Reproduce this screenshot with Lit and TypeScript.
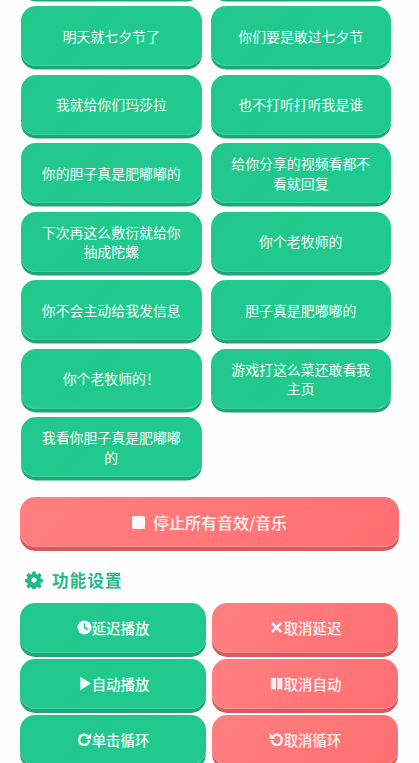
import { LitElement, html, css, svg } from "lit";
import { customElement } from "lit/decorators.js";

const rows: string[] = [
  "",
  "",
  "明天就七夕节了",
  "你们要是敢过七夕节",
  "我就给你们玛莎拉",
  "也不打听打听我是谁",
  "你的胆子真是肥嘟嘟的",
  "给你分享的视频看都不看就回复",
  "下次再这么敷衍就给你抽成陀螺",
  "你个老牧师的",
  "你不会主动给我发信息",
  "胆子真是肥嘟嘟的",
  "你个老牧师的！",
  "游戏打这么菜还敢看我主页",
  "我看你胆子真是肥嘟嘟的",
];

const icons: Record<string, unknown> = {
  clock: svg`<circle cx="8" cy="8" r="7.5" fill="currentColor"/><path d="M8 3.6V8l3.4 2.2" fill="none" stroke="#22c78e" stroke-width="1.8"/>`,
  play: svg`<path d="M3.500 .8v14.400L15 8z" fill="currentColor"/>`,
  redo: svg`<path d="M13 8.600a5.400 5.400 0 1 1-1.700-4.200" fill="none" stroke="currentColor" stroke-width="2.600"/><path d="M15.200 1v6.200H9z" fill="currentColor"/>`,
  x: svg`<path d="M3 3l10 10M13 3L3 13" fill="none" stroke="currentColor" stroke-width="2.600"/>`,
  pause: svg`<path d="M2 2h5.500v12H2zM8.700 2h5.500v12H8.700z" fill="currentColor"/>`,
  undo: svg`<path d="M3 8.600a5.400 5.400 0 1 0 1.700-4.200" fill="none" stroke="currentColor" stroke-width="2.600"/><path d="M.8 1v6.200H7z" fill="currentColor"/>`,
};

const actions: [string, string, string][] = [
  ["clock", "延迟播放", "g"],
  ["x", "取消延迟", "r"],
  ["play", "自动播放", "g"],
  ["pause", "取消自动", "r"],
  ["redo", "单击循环", "g"],
  ["undo", "取消循环", "r"],
];

@customElement("app-root")
export class AppRoot extends LitElement {
  static styles = css`
    :host {
      display: block;
      width: 419px;
      height: 763px;
      overflow: hidden;
      background: #fefefe;
      font-family: "Noto Sans CJK SC", "Noto Sans", sans-serif;
    }
    .page {
      margin-top: -62.5px;
      padding: 0 20px;
      display: flex;
      flex-direction: column;
    }
    .cards {
      display: grid;
      grid-template-columns: 181.5px 181.5px;
      grid-auto-rows: 60px;
      column-gap: 8px;
      row-gap: 8.5px;
    }
    .card {
      display: flex;
      align-items: center;
      justify-content: center;
      text-align: center;
      box-sizing: border-box;
      padding: 1px 16px 0;
      margin-left: 1px;
      color: #f2fff9;
      font-size: 13.9px;
      line-height: 19.3px;
      border-radius: 15px;
      background: linear-gradient(135deg, #22c78c, #20ca8e);
      box-shadow: inset 0 -2px 1px -1px #3fd2a0, 0 3.5px 0 #1ea578;
    }
    .stop {
      margin-top: 20px;
      height: 50px;
      box-sizing: border-box;
      border-radius: 15px;
      display: flex;
      align-items: center;
      justify-content: center;
      gap: 8px;
      color: #fff3f1;
      font-size: 16px;
      font-weight: 500;
      background: linear-gradient(135deg, #ff8080, #ff6e70);
      box-shadow: inset 0 -2px 1px -1px #ff9393, 0 4px 0 #d95a5c;
    }
    .square {
      width: 13px;
      height: 13px;
      border-radius: 2px;
      background: #fff8f5;
    }
    .title {
      margin-top: 21px;
      padding-left: 5px;
      height: 24px;
      display: flex;
      align-items: center;
      gap: 9px;
      color: #22b887;
      font-size: 16.5px;
      font-weight: 700;
      letter-spacing: 1.2px;
    }
    .title svg {
      width: 18px;
      height: 18px;
      color: #22b887;
    }
    .actions {
      margin-top: 11px;
      display: grid;
      grid-template-columns: 186px 186px;
      grid-auto-rows: 50px;
      column-gap: 6px;
      row-gap: 6px;
    }
    .act {
      display: flex;
      align-items: center;
      justify-content: center;
      box-sizing: border-box;
      padding-bottom: 2px;
      border-radius: 15px;
      font-size: 14.4px;
      font-weight: 500;
      color: #eefff8;
    }
    .act svg {
      width: 15px;
      height: 15px;
      flex: none;
    }
    .g {
      background: linear-gradient(135deg, #22c78c, #20ca8e);
      box-shadow: inset 0 -2px 1px -1px #3fd2a0, 0 4px 0 #1ea578;
    }
    .r {
      color: #fff3f1;
      background: linear-gradient(135deg, #ff8080, #ff6e70);
      box-shadow: inset 0 -2px 1px -1px #ff9393, 0 4px 0 #d95a5c;
    }
  `;

  render() {
    return html`<div class="page">
      <div class="cards">
        ${rows.map((t) => html`<div class="card">${t}</div>`)}
      </div>
      <div class="stop"><span class="square"></span>停止所有音效/音乐</div>
      <div class="title">
        <svg viewBox="0 0 24 24"><path fill="currentColor" fill-rule="evenodd" d="M10 .5h4l.7 3.300 1.900.8L19.400 2.800l2.800 2.800-1.800 2.800.8 1.900 3.300.7v4l-3.300.7-.8 1.900 1.800 2.800-2.800 2.800-2.800-1.800-1.900.8-.7 3.300h-4l-.7-3.300-1.900-.8-2.800 1.800-2.800-2.800 1.800-2.800-.8-1.900-3.300-.7v-4l3.300-.7.8-1.900-1.800-2.800 2.800-2.800 2.800 1.800 1.900-.8zM12 8.500a3.500 3.500 0 1 0 0 7 3.500 3.500 0 0 0 0-7z"/></svg>
        功能设置
      </div>
      <div class="actions">
        ${actions.map(
          ([i, t, c]) => html`<div class="act ${c}"><svg viewBox="0 0 16 16">${icons[i]}</svg>${t}</div>`
        )}
      </div>
    </div>`;
  }
}
